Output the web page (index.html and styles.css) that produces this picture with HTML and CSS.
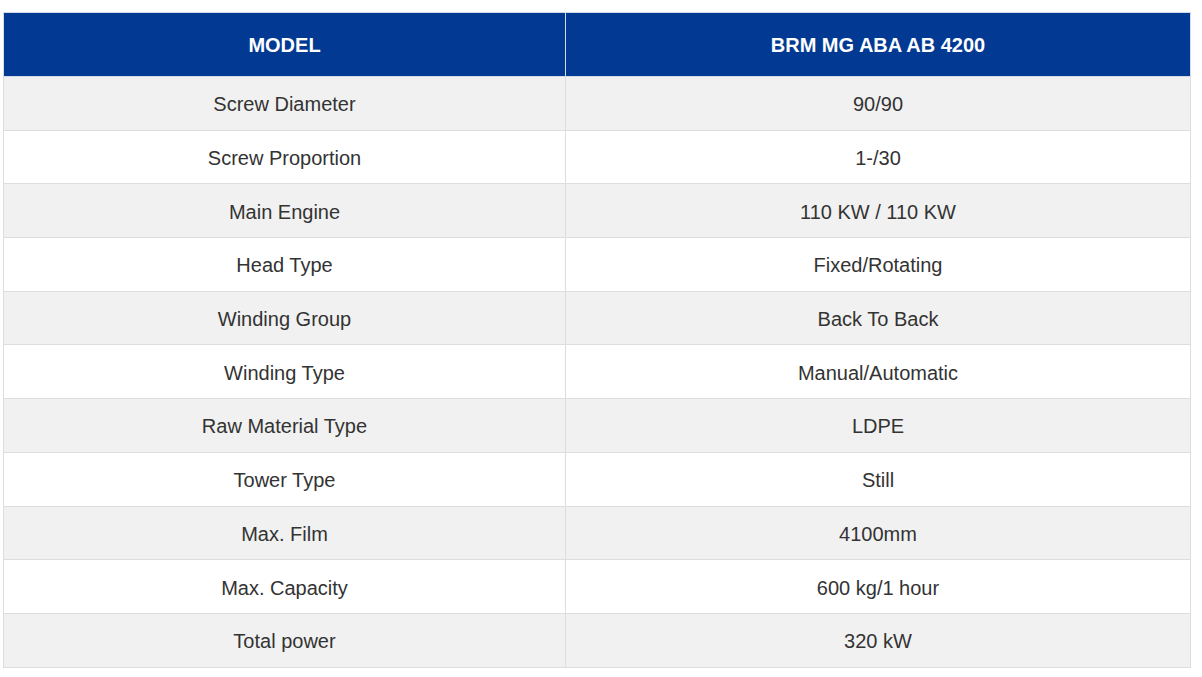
FILE: index.html
```html
<!DOCTYPE html>
<html>
<head>
<meta charset="utf-8">
<link rel="stylesheet" href="styles.css">
</head>
<body>
<div class="wrap">
<table class="spec">
  <thead>
    <tr><th class="c1">MODEL</th><th>BRM MG ABA AB 4200</th></tr>
  </thead>
  <tbody>
    <tr><td>Screw Diameter</td><td>90/90</td></tr>
    <tr><td>Screw Proportion</td><td>1-/30</td></tr>
    <tr><td>Main Engine</td><td>110 KW / 110 KW</td></tr>
    <tr><td>Head Type</td><td>Fixed/Rotating</td></tr>
    <tr><td>Winding Group</td><td>Back To Back</td></tr>
    <tr><td>Winding Type</td><td>Manual/Automatic</td></tr>
    <tr><td>Raw Material Type</td><td>LDPE</td></tr>
    <tr><td>Tower Type</td><td>Still</td></tr>
    <tr><td>Max. Film</td><td>4100mm</td></tr>
    <tr><td>Max. Capacity</td><td>600 kg/1 hour</td></tr>
    <tr><td>Total power</td><td>320 kW</td></tr>
  </tbody>
</table>
</div>
</body>
</html>
```

FILE: styles.css
```css
html, body { margin: 0; padding: 0; background: #fff; }
.wrap { padding: 12px 11px 0 3px; }
.spec {
  width: 1188px;
  border-collapse: collapse;
  table-layout: fixed;
  font-family: "Liberation Sans", Arial, sans-serif;
  font-size: 20px;
  color: #333;
}
.spec th, .spec td {
  border: 1px solid #ddd;
  text-align: center;
  vertical-align: middle;
  padding: 0 10px;
}
.spec th {
  background: #023a93;
  color: #fff;
  font-weight: bold;
  height: 61px;
  padding-top: 2px;
  border-color: #d4dbe8;
}
.spec th.c1 { width: 541px; }
.spec td { height: 49.7px; padding-top: 3px; }
.spec tbody tr:nth-child(odd) td { background: #f1f1f1; }
.spec tbody tr:nth-child(even) td { background: #fff; }
```
